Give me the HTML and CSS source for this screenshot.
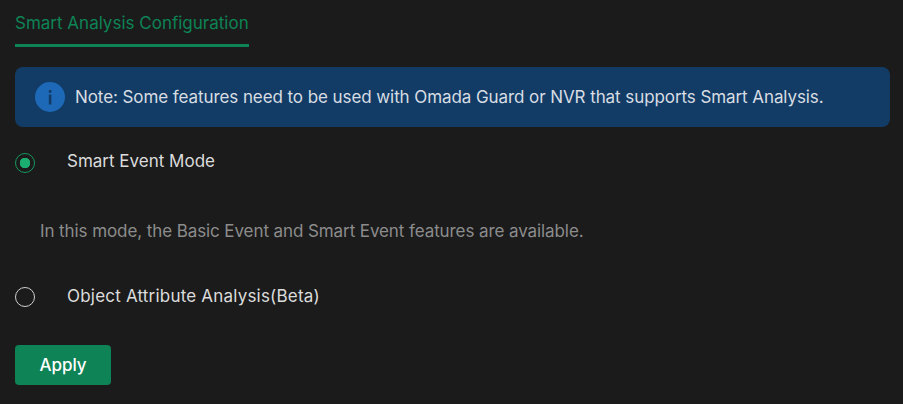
FILE: index.html
```html
<!DOCTYPE html>
<html lang="en">
  <head>
    <meta charset="UTF-8" />
    <title>Smart Analysis Configuration</title>
    <link rel="stylesheet" href="styles.css">
  </head>
  <body>
    <div class="tabs">
      <span class="tab">Smart Analysis Configuration</span>
    </div>

    <div class="note">
      <svg class="note-icon" viewBox="0 0 30 30" width="30" height="30">
        <circle cx="15" cy="15" r="15" fill="#1d69b7" />
        <rect x="13.8" y="8" width="2.6" height="2.8" rx="0.6" fill="#123c66" />
        <rect x="13.8" y="12.6" width="2.6" height="10" rx="0.6" fill="#123c66" />
      </svg>
      <span>Note: Some features need to be used with Omada Guard or NVR that supports Smart Analysis.</span>
    </div>

    <div class="option option-first">
      <span class="radio radio-on"></span>
      <span class="option-label">Smart Event Mode</span>
    </div>
    <p class="option-desc">In this mode, the Basic Event and Smart Event features are available.</p>
    <div class="option">
      <span class="radio"></span>
      <span class="option-label option-label-wide">Object Attribute Analysis(Beta)</span>
    </div>

    <button class="btn">Apply</button>
  </body>
</html>
```

FILE: styles.css
```css
body {
  font-family: Inter, "Open Sans", sans-serif;
  background-color: #1b1b1b;
  color: #dcdcdc;
  margin: 0;
  padding: 0 13px 0 15px;
  font-size: 17px;
  overflow: hidden;
}

.tabs {
  display: flex;
  height: 47px;
}

.tab {
  width: 234px;
  height: 47px;
  box-sizing: border-box;
  padding-top: 13px;
  line-height: 20px;
  color: #0e8356;
  white-space: nowrap;
  border-bottom: 3px solid #0e8356;
}

.note {
  display: flex;
  align-items: center;
  gap: 10px;
  height: 60px;
  margin-top: 20px;
  padding-left: 20px;
  background-color: #123c66;
  border-radius: 8px;
  color: #d8dde3;
  letter-spacing: -0.08px;
  white-space: nowrap;
}

.note-icon {
  flex-shrink: 0;
}

.option {
  display: flex;
  align-items: center;
  height: 20px;
}

.option-first {
  margin-top: 26px;
}

.radio {
  width: 20px;
  height: 20px;
  box-sizing: border-box;
  border: 1px solid #d0d0d0;
  border-radius: 50%;
  flex-shrink: 0;
}

.radio-on {
  border-color: #17975f;
  background: radial-gradient(circle, #1cae70 0, #1cae70 5px, transparent 5.5px);
}

.option-label {
  margin-left: 32px;
  position: relative;
  top: -2px;
  color: #dcdcdc;
}

.option-label-wide {
  top: -1px;
  letter-spacing: 0.2px;
}

.option-desc {
  margin: 48px 0 46px 25px;
  height: 20px;
  line-height: 20px;
  color: #8c8c8c;
  letter-spacing: -0.09px;
}

.btn {
  display: block;
  width: 96px;
  height: 40px;
  margin-top: 38px;
  padding: 0;
  background-color: #0e8356;
  color: #fff;
  border: none;
  border-radius: 4px;
  font-family: inherit;
  font-size: 17px;
  font-weight: 500;
  text-align: center;
  cursor: pointer;
}
```
